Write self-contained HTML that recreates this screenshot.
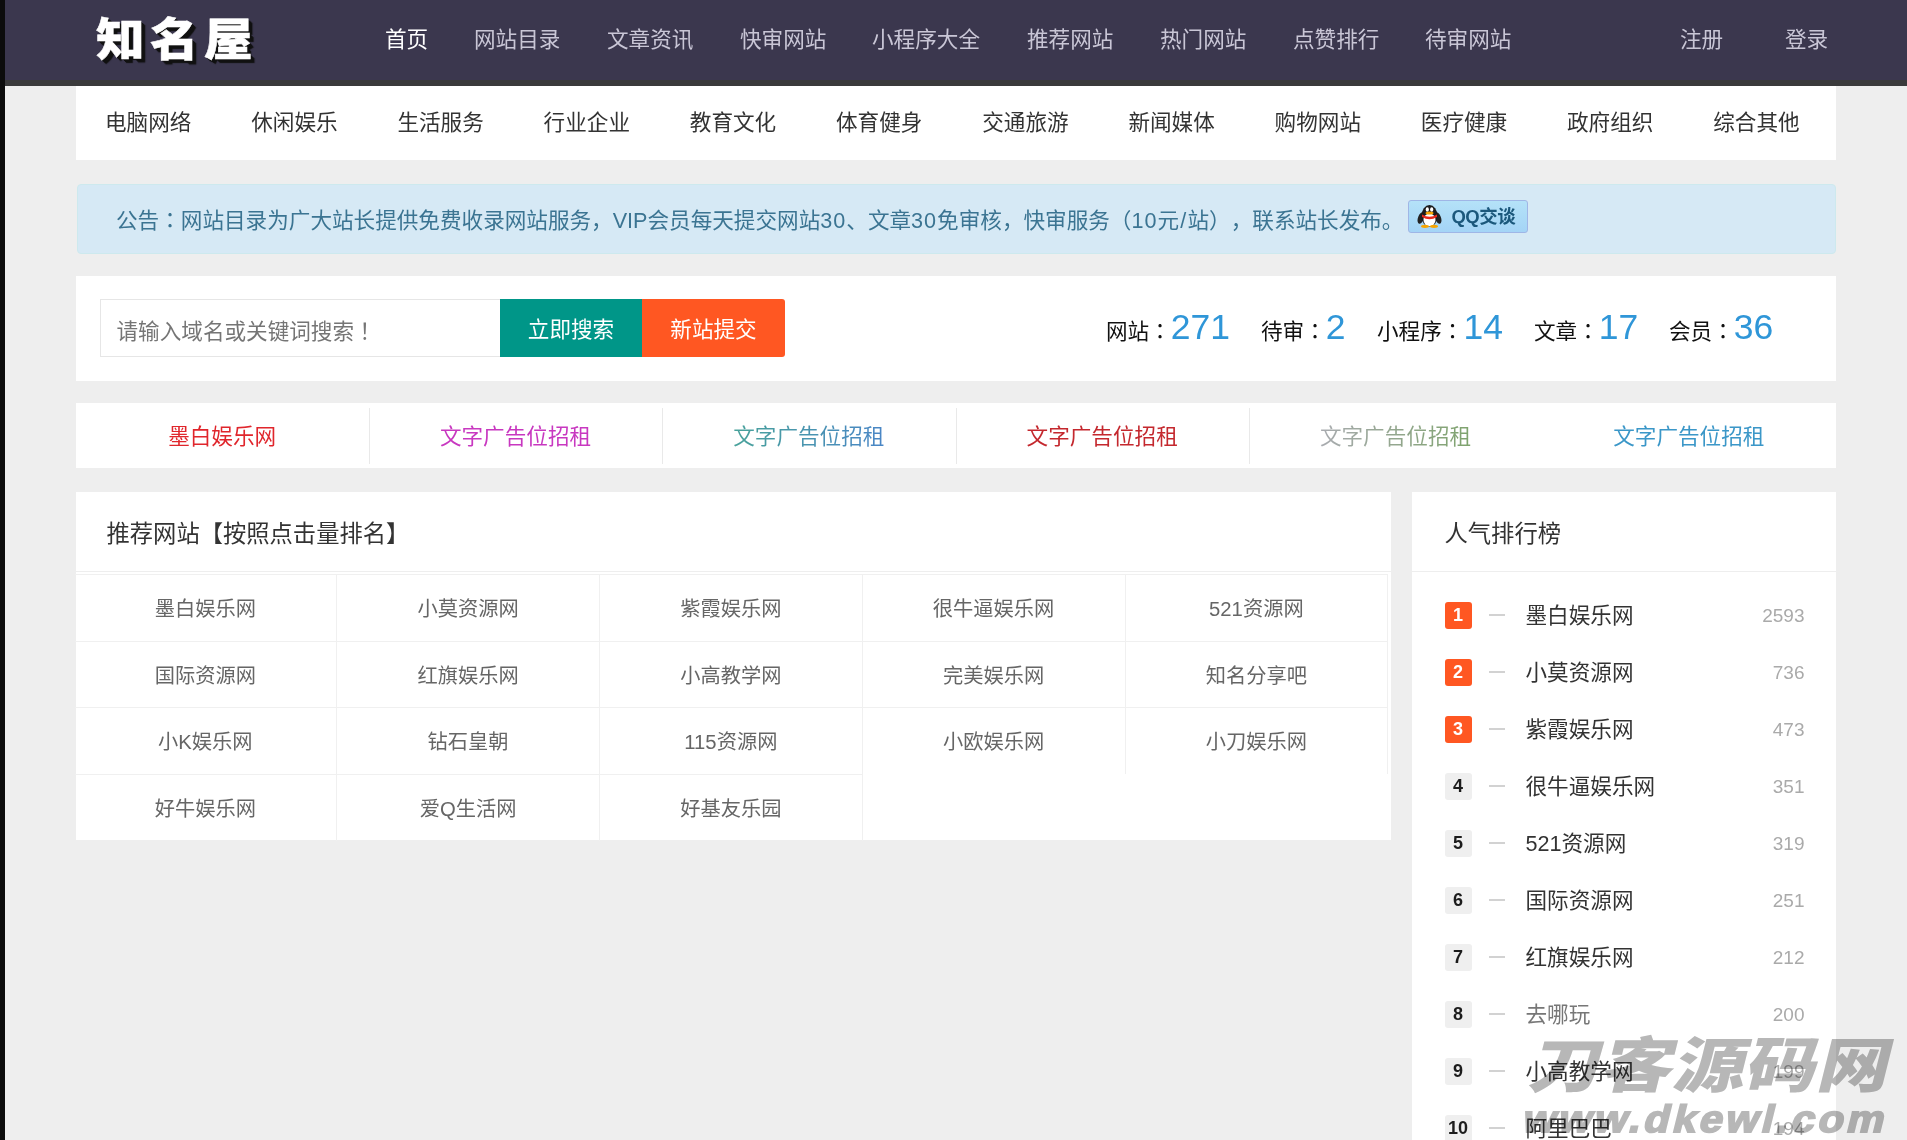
<!DOCTYPE html>
<html lang="zh-CN">
<head>
<meta charset="utf-8">
<title>知名屋</title>
<style>
*{margin:0;padding:0;box-sizing:border-box}
html,body{width:1907px;height:1140px;overflow:hidden}
body{position:relative;text-spacing-trim:space-all;background:#eee;font-family:"Liberation Sans","Noto Sans CJK SC",sans-serif;font-size:21.6px;color:#333}
a{text-decoration:none;color:inherit}
.abs{position:absolute}
#edge{left:0;top:0;width:5px;height:1140px;background:#0c0c0c}
#hdr{left:5px;top:0;width:1902px;height:80px;background:#3b374e}
#hdrline{left:5px;top:80px;width:1902px;height:5.5px;background:#3a3a3b}
#logo{-webkit-text-stroke:0.5px #fff;left:96px;top:4.5px;height:72px;line-height:72px;font-size:45px;font-weight:900;color:#fff;letter-spacing:5px;transform:scaleX(1.08);transform-origin:0 50%;white-space:nowrap;text-shadow:1px 1px 0 #111,2px 2px 0 #111,3px 3px 0 #111,4px 4px 1px #111}
.nav a{position:absolute;top:18px;height:44px;line-height:44px;white-space:nowrap;color:#c9c6d6;font-size:21.6px}
.nav a.on{color:#fff}
#cats{left:75.5px;top:85.5px;width:1760px;height:74.5px;background:#fff}
#cats a{position:absolute;top:0;height:74.5px;line-height:74.5px;white-space:nowrap;color:#333}
#notice{left:77px;top:184px;width:1759px;height:70px;background:#d6e9f5;border:1px solid #cde9ee;border-radius:4px;color:#3b7492;line-height:71px;padding-left:38px;white-space:nowrap}
#qq{display:inline-block;vertical-align:middle;position:relative;top:-6px;margin-left:5px;width:120px;height:33px;border:1px solid #9fb6e6;border-radius:3px;background:linear-gradient(#b4e2f8,#a4d4f6);line-height:31px;font-size:18.5px;font-weight:bold;color:#1b587c;padding-left:42px;letter-spacing:-0.5px}
#qq svg{position:absolute;left:8px;top:2px}
.d{letter-spacing:1px}
#search{left:75.5px;top:276px;width:1760px;height:105px;background:#fff}
#inp{left:99.5px;top:299px;width:401px;height:58px;border:1px solid #e6e6e6;background:#fff;color:#757575;line-height:63px;padding-left:16px}
.btn{position:absolute;top:299px;height:58px;line-height:61px;text-align:center;color:#fff}
#b1{left:500px;width:142px;background:#009688}
#b2{left:642px;width:143px;background:#ff5722;border-radius:0 3px 3px 0}
.st{position:absolute;top:298.5px;height:56px;line-height:56px;white-space:nowrap;color:#111}
.st b{font-weight:normal;font-size:35.5px;color:#2f96d8;vertical-align:baseline;position:relative;top:0}
.jp{font-family:"Liberation Sans","Noto Sans CJK JP",sans-serif}
#ads{left:75.5px;top:403px;width:1760px;height:65px;background:#fff}
#ads a{position:absolute;top:0;width:293.33px;height:65px;line-height:67px;text-align:center}
#ads i{position:absolute;top:5px;width:1px;height:56px;background:#e9e9e9}
.g{-webkit-background-clip:text;background-clip:text;color:transparent;-webkit-text-fill-color:transparent}
.card{position:absolute;background:#fff}
.card h3{position:absolute;left:0;top:0;width:100%;height:80px;line-height:85px;font-weight:normal;font-size:23.3px;color:#333;border-bottom:1px solid #eee}
#grid a{position:absolute;width:262.75px;height:66.67px;line-height:68px;text-align:center;font-size:20.25px;color:#666;border-right:1px solid #f0f0f0;border-top:1px solid #f0f0f0}
.rk{position:absolute;left:0;width:100%;height:57px}
.rk em{position:absolute;left:33px;top:15px;width:27px;height:27px;line-height:27px;border-radius:3px;background:#efefef;color:#1c1c1c;text-align:center;font-style:normal;font-size:18px;font-weight:bold}
.rk em.hot{background:#ff5722;color:#fff}
.rk u{position:absolute;left:77px;top:27.5px;width:16px;height:2px;background:#d2d2d2;text-decoration:none}
.rk a{position:absolute;left:114px;top:0;height:57px;line-height:58px;white-space:nowrap;color:#333}
.rk span{position:absolute;right:31px;top:0;height:57px;line-height:58px;font-size:19px;color:#aaa}
#wm{left:0;top:0;width:1907px;height:1140px;pointer-events:none;color:#b7b7b7;mix-blend-mode:multiply}
#wm div{position:absolute;white-space:nowrap;transform-origin:0 100%}
#wm .w1{font-weight:900;left:1522px;top:1026.5px;font-size:60px;line-height:80px;transform:skewX(-14deg) scaleX(1.2)}
#wm .w2{left:1519px;top:1097px;font-size:38px;line-height:44px;font-weight:bold;letter-spacing:3px;-webkit-text-stroke:1.8px #b7b7b7;transform:skewX(-14deg) scaleX(1.1)}
</style>
</head>
<body>
<div id="edge" class="abs"></div>
<div id="hdr" class="abs"></div>
<div id="hdrline" class="abs"></div>
<div id="logo" class="abs">知名屋</div>
<div class="nav">
<a class="on" style="left:385px">首页</a>
<a style="left:474px">网站目录</a>
<a style="left:607px">文章资讯</a>
<a style="left:740px">快审网站</a>
<a style="left:872px">小程序大全</a>
<a style="left:1027px">推荐网站</a>
<a style="left:1160px">热门网站</a>
<a style="left:1293px">点赞排行</a>
<a style="left:1425px">待审网站</a>
<a style="left:1680px">注册</a>
<a style="left:1785px">登录</a>
</div>
<div id="cats" class="abs">
<a style="left:29.5px">电脑网络</a>
<a style="left:175.7px">休闲娱乐</a>
<a style="left:321.9px">生活服务</a>
<a style="left:468.1px">行业企业</a>
<a style="left:614.3px">教育文化</a>
<a style="left:760.5px">体育健身</a>
<a style="left:906.7px">交通旅游</a>
<a style="left:1052.9px">新闻媒体</a>
<a style="left:1199.1px">购物网站</a>
<a style="left:1345.3px">医疗健康</a>
<a style="left:1491.5px">政府组织</a>
<a style="left:1637.7px">综合其他</a>
</div>
<div id="notice" class="abs">公告<span class="jp" lang="ja">：</span>网站目录为广大站长提供免费收录网站服务，VIP会员每天提交网站<span class="d">30</span>、文章<span class="d">30</span>免审核，快审服务（<span class="d">10</span>元<span style="letter-spacing:1.2px;margin-left:1.2px">/</span>站），联系站长发布。<span id="qq"><svg width="25" height="25" viewBox="0 0 25 25"><ellipse cx="4" cy="15" rx="3" ry="6" fill="#222" transform="rotate(20 4 15)"/><ellipse cx="21" cy="15" rx="3" ry="6" fill="#222" transform="rotate(-20 21 15)"/><ellipse cx="12.5" cy="13" rx="8" ry="11" fill="#1c1c1c"/><ellipse cx="12.5" cy="17" rx="6" ry="6.5" fill="#fff"/><ellipse cx="10.3" cy="6.5" rx="1.6" ry="2.3" fill="#fff"/><ellipse cx="14.7" cy="6.5" rx="1.6" ry="2.3" fill="#fff"/><ellipse cx="12.5" cy="10" rx="4" ry="1.6" fill="#f7a400"/><path d="M5 11.5 Q12.5 16 20 11.5 L20 14 Q12.5 18.5 5 14 Z" fill="#e8291c"/><ellipse cx="8" cy="23.3" rx="4" ry="1.6" fill="#f7a400"/><ellipse cx="17" cy="23.3" rx="4" ry="1.6" fill="#f7a400"/></svg>QQ交谈</span></div>
<div id="search" class="abs"></div>
<div id="inp" class="abs">请输入域名或关键词搜索<span class="jp" lang="ja">！</span></div>
<div id="b1" class="btn">立即搜索</div>
<div id="b2" class="btn">新站提交</div>
<div class="st" style="left:1106px">网站<span class="jp" lang="ja">：</span><b>271</b></div>
<div class="st" style="left:1261px">待审<span class="jp" lang="ja">：</span><b>2</b></div>
<div class="st" style="left:1377px">小程序<span class="jp" lang="ja">：</span><b>14</b></div>
<div class="st" style="left:1534px">文章<span class="jp" lang="ja">：</span><b>17</b></div>
<div class="st" style="left:1669px">会员<span class="jp" lang="ja">：</span><b>36</b></div>
<div id="ads" class="abs">
<a style="left:0;color:#e0262c">墨白娱乐网</a>
<a style="left:293.33px;color:#c838c0">文字广告位招租</a>
<a style="left:586.67px;color:#4a96b4"><span class="g" style="background-image:linear-gradient(90deg,#48a29a,#4a86c6)">文字广告位招租</span></a>
<a style="left:880px;color:#c4282e">文字广告位招租</a>
<a style="left:1173.33px;color:#94a79a"><span class="g" style="background-image:linear-gradient(90deg,#a9abb0,#7ea36d)">文字广告位招租</span></a>
<a style="left:1466.67px;color:#3b97c8">文字广告位招租</a>
<i style="left:293px"></i><i style="left:586px"></i><i style="left:880px"></i><i style="left:1173px"></i>
</div>
<div class="card" style="left:75.5px;top:492px;width:1315px;height:348px">
<h3 style="padding-left:31px">推荐网站【按照点击量排名】</h3>
<div id="grid" class="abs" style="left:-1px;top:82px">
<a style="left:0;top:0">墨白娱乐网</a><a style="left:262.75px;top:0">小莫资源网</a><a style="left:525.5px;top:0">紫霞娱乐网</a><a style="left:788.25px;top:0">很牛逼娱乐网</a><a style="left:1051px;top:0">521资源网</a>
<a style="left:0;top:66.67px">国际资源网</a><a style="left:262.75px;top:66.67px">红旗娱乐网</a><a style="left:525.5px;top:66.67px">小高教学网</a><a style="left:788.25px;top:66.67px">完美娱乐网</a><a style="left:1051px;top:66.67px">知名分享吧</a>
<a style="left:0;top:133.33px">小K娱乐网</a><a style="left:262.75px;top:133.33px">钻石皇朝</a><a style="left:525.5px;top:133.33px">115资源网</a><a style="left:788.25px;top:133.33px">小欧娱乐网</a><a style="left:1051px;top:133.33px">小刀娱乐网</a>
<a style="left:0;top:200px">好牛娱乐网</a><a style="left:262.75px;top:200px">爱Q生活网</a><a style="left:525.5px;top:200px">好基友乐园</a>
</div>
</div>
<div class="card" style="left:1411.5px;top:492px;width:424px;height:660px">
<h3 style="padding-left:33px">人气排行榜</h3>
<div class="rk" style="top:94.5px"><em class="hot">1</em><u></u><a>墨白娱乐网</a><span>2593</span></div>
<div class="rk" style="top:151.5px"><em class="hot">2</em><u></u><a>小莫资源网</a><span>736</span></div>
<div class="rk" style="top:208.5px"><em class="hot">3</em><u></u><a>紫霞娱乐网</a><span>473</span></div>
<div class="rk" style="top:265.5px"><em>4</em><u></u><a>很牛逼娱乐网</a><span>351</span></div>
<div class="rk" style="top:322.5px"><em>5</em><u></u><a>521资源网</a><span>319</span></div>
<div class="rk" style="top:379.5px"><em>6</em><u></u><a>国际资源网</a><span>251</span></div>
<div class="rk" style="top:436.5px"><em>7</em><u></u><a>红旗娱乐网</a><span>212</span></div>
<div class="rk" style="top:493.5px"><em>8</em><u></u><a style="color:#777">去哪玩</a><span>200</span></div>
<div class="rk" style="top:550.5px"><em>9</em><u></u><a>小高教学网</a><span>199</span></div>
<div class="rk" style="top:607.5px"><em>10</em><u></u><a>阿里巴巴</a><span>194</span></div>
</div>
<div id="wm" class="abs">
<div class="w1">刀客源码网</div>
<div class="w2">www.dkewl.com</div>
</div>
</body>
</html>
